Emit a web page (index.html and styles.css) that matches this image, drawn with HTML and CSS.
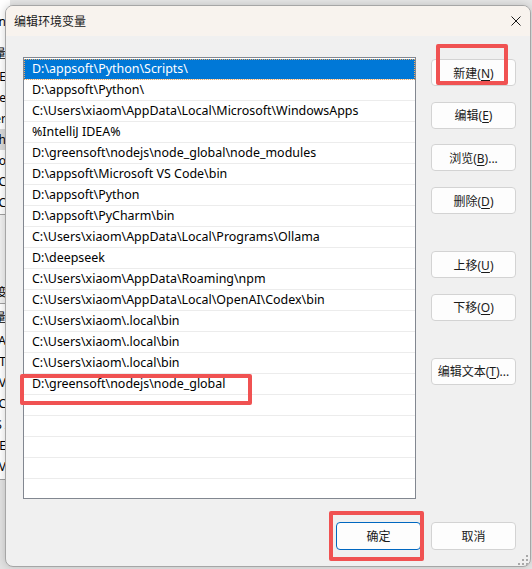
FILE: index.html
```html
<!DOCTYPE html>
<html lang="zh-CN">
<head>
<meta charset="UTF-8">
<title>编辑环境变量</title>
<link rel="stylesheet" href="styles.css">
</head>
<body>
<!-- the settings window sitting behind the dialog -->
<div class="backwin">
    <div class="bk-pane bk-top">
        <div class="bk-head">Administrator 的用户变量 n</div>
        <div class="bk-cols">变量</div>
        <div class="bk-row">IDE</div>
        <div class="bk-row">OneDrive</div>
        <div class="bk-row">OneDriveConsumer</div>
        <div class="bk-row bk-sel">Path</div>
        <div class="bk-row">PyCharm Community Editio</div>
        <div class="bk-row">TEMPC</div>
        <div class="bk-row">TMPC</div>
    </div>
    <div class="bk-gap">系统变</div>
    <div class="bk-pane bk-bottom">
        <div class="bk-cols">变量</div>
        <div class="bk-row">CLASSPATH A</div>
        <div class="bk-row">ComSpec T</div>
        <div class="bk-row">DriverData V</div>
        <div class="bk-row">JAVA_HOME C</div>
        <div class="bk-row">NUMBER_OF_PROCESSORS A</div>
        <div class="bk-row">OS E</div>
        <div class="bk-row">Path V</div>
    </div>
</div>

<div class="dialog">
    <div class="titlebar">
        <span class="title">编辑环境变量</span>
        <svg class="close" width="10" height="10" viewBox="0 0 10 10">
            <path d="M0.5 0.5 L9.5 9.5 M9.5 0.5 L0.5 9.5" stroke="#1a1a1a" stroke-width="1"/>
        </svg>
    </div>
    <div class="content">
        <div class="main">
            <ul class="pathlist">
                <li class="sel">D:\appsoft\Python\Scripts\</li>
                <li>D:\appsoft\Python\</li>
                <li>C:\Users\xiaom\AppData\Local\Microsoft\WindowsApps</li>
                <li>%IntelliJ IDEA%</li>
                <li>D:\greensoft\nodejs\node_global\node_modules</li>
                <li>D:\appsoft\Microsoft VS Code\bin</li>
                <li>D:\appsoft\Python</li>
                <li>D:\appsoft\PyCharm\bin</li>
                <li>C:\Users\xiaom\AppData\Local\Programs\Ollama</li>
                <li>D:\deepseek</li>
                <li>C:\Users\xiaom\AppData\Roaming\npm</li>
                <li>C:\Users\xiaom\AppData\Local\OpenAI\Codex\bin</li>
                <li>C:\Users\xiaom\.local\bin</li>
                <li>C:\Users\xiaom\.local\bin</li>
                <li>C:\Users\xiaom\.local\bin</li>
                <li>D:\greensoft\nodejs\node_global</li>
                <li></li>
                <li></li>
                <li></li>
                <li></li>
                <li></li>
            </ul>
            <div class="side">
                <button class="btn">新建(<u>N</u>)</button>
                <button class="btn">编辑(<u>E</u>)</button>
                <button class="btn">浏览(<u>B</u>)...</button>
                <button class="btn">删除(<u>D</u>)</button>
                <button class="btn apart">上移(<u>U</u>)</button>
                <button class="btn">下移(<u>O</u>)</button>
                <button class="btn apart">编辑文本(<u>T</u>)...</button>
            </div>
        </div>
        <div class="footer">
            <button class="btn btn-default">确定</button>
            <button class="btn">取消</button>
        </div>
    </div>
    <svg class="grip" width="10" height="10" viewBox="0 0 10 10">
        <rect x="8" y="0" width="2" height="2" fill="#a8a8a8"/>
        <rect x="4" y="4" width="2" height="2" fill="#a8a8a8"/>
        <rect x="8" y="4" width="2" height="2" fill="#a8a8a8"/>
        <rect x="0" y="8" width="2" height="2" fill="#a8a8a8"/>
        <rect x="4" y="8" width="2" height="2" fill="#a8a8a8"/>
        <rect x="8" y="8" width="2" height="2" fill="#a8a8a8"/>
    </svg>
</div>

<!-- red highlight boxes drawn on top -->
<div class="mark mark-new"></div>
<div class="mark mark-row"></div>
<div class="mark mark-ok"></div>
</body>
</html>
```

FILE: styles.css
```css
* {
    box-sizing: border-box;
}

html, body {
    margin: 0;
    padding: 0;
}

body {
    width: 532px;
    height: 569px;
    position: relative;
    overflow: hidden;
    background-color: #e6e6e6;
    font-family: "Noto Sans", "Noto Sans CJK SC", sans-serif;
    font-size: 12px;
    color: #000;
}

/* window behind the dialog */
.backwin {
    position: absolute;
    left: -150px;
    top: 0;
    width: 160px;
    height: 569px;
    display: flex;
    flex-direction: column;
    background-color: #e2e2e2;
}

.bk-pane {
    background-color: #fff;
    text-align: right;
    padding-right: 4px;
    white-space: nowrap;
}

.bk-top {
    height: 215px;
    padding-top: 12px;
    border-bottom: 1px solid #a0a0a0;
}

.bk-head {
    height: 30px;
    line-height: 20px;
}

.bk-cols {
    height: 24px;
    line-height: 24px;
}

.bk-row {
    height: 21px;
    line-height: 21px;
}

.bk-sel {
    background-color: #d9d9d9;
}

.bk-gap {
    height: 88px;
    background-color: #f0f0f0;
    text-align: right;
    padding-right: 2px;
    padding-top: 70px;
    line-height: 16px;
}

.bk-bottom {
    height: 177px;
    border-top: 1px solid #a0a0a0;
    border-bottom: 1px solid #a0a0a0;
    padding-top: 2px;
}

/* dialog window */
.dialog {
    position: absolute;
    left: 5px;
    top: 5px;
    width: 526px;
    height: 562px;
    background-color: #f0f0f0;
    border: 1px solid #a6a6a6;
    border-radius: 8px;
    overflow: hidden;
    display: flex;
    flex-direction: column;
    box-shadow: 0 0 8px rgba(0, 0, 0, 0.18);
}

.titlebar {
    height: 30px;
    flex: none;
    background-color: #f8f3ee;
    display: flex;
    align-items: center;
    justify-content: space-between;
    padding-left: 8px;
    padding-right: 9px;
    padding-bottom: 1px;
}

.title {
    font-family: "Noto Sans CJK SC", sans-serif;
    font-size: 12px;
    color: #1a1a1a;
}

.content {
    flex: 1;
    padding: 21px 14px 0 17px;
    display: flex;
    flex-direction: column;
}

.main {
    display: flex;
    gap: 15px;
}

.pathlist {
    width: 393px;
    height: 442px;
    margin: 0;
    padding: 1px 0 0 0;
    list-style: none;
    background-color: #fff;
    border: 1px solid #828790;
    overflow: hidden;
}

.pathlist li {
    height: 21px;
    line-height: 20px;
    padding-left: 8px;
    border-bottom: 1px solid #ececec;
    white-space: nowrap;
    font-size: 12.45px;
    color: #000;
}

.pathlist li.sel {
    background-color: #0078d7;
    color: #fff;
    outline: 1px dotted #f0a860;
    outline-offset: -1px;
}

.side {
    width: 85px;
    padding-top: 2px;
    display: flex;
    flex-direction: column;
    gap: 15.7px;
}

.btn {
    height: 27px;
    width: 85px;
    padding: 0;
    background-color: #fdfdfd;
    border: 1px solid #d3d3d3;
    border-radius: 4px;
    font-family: "Noto Sans", "Noto Sans CJK SC", sans-serif;
    font-size: 12px;
    color: #1a1a1a;
    cursor: pointer;
}

.btn u {
    text-underline-offset: 2px;
}

.side .apart {
    margin-top: 21.3px;
}

.footer {
    display: flex;
    justify-content: flex-end;
    gap: 10px;
    margin-top: 23px;
}

.footer .btn {
    height: 28px;
}

.btn-default {
    border-color: #0067c0;
}

.grip {
    position: absolute;
    right: 2px;
    bottom: 1px;
}

/* red annotation boxes */
.mark {
    position: absolute;
    border: 4px solid #f05252;
    border-radius: 2px;
}

.mark-new {
    left: 436px;
    top: 44px;
    width: 72px;
    height: 41px;
}

.mark-row {
    left: 20px;
    top: 374px;
    width: 232px;
    height: 31px;
}

.mark-ok {
    left: 329px;
    top: 511px;
    width: 95px;
    height: 50px;
}
```
